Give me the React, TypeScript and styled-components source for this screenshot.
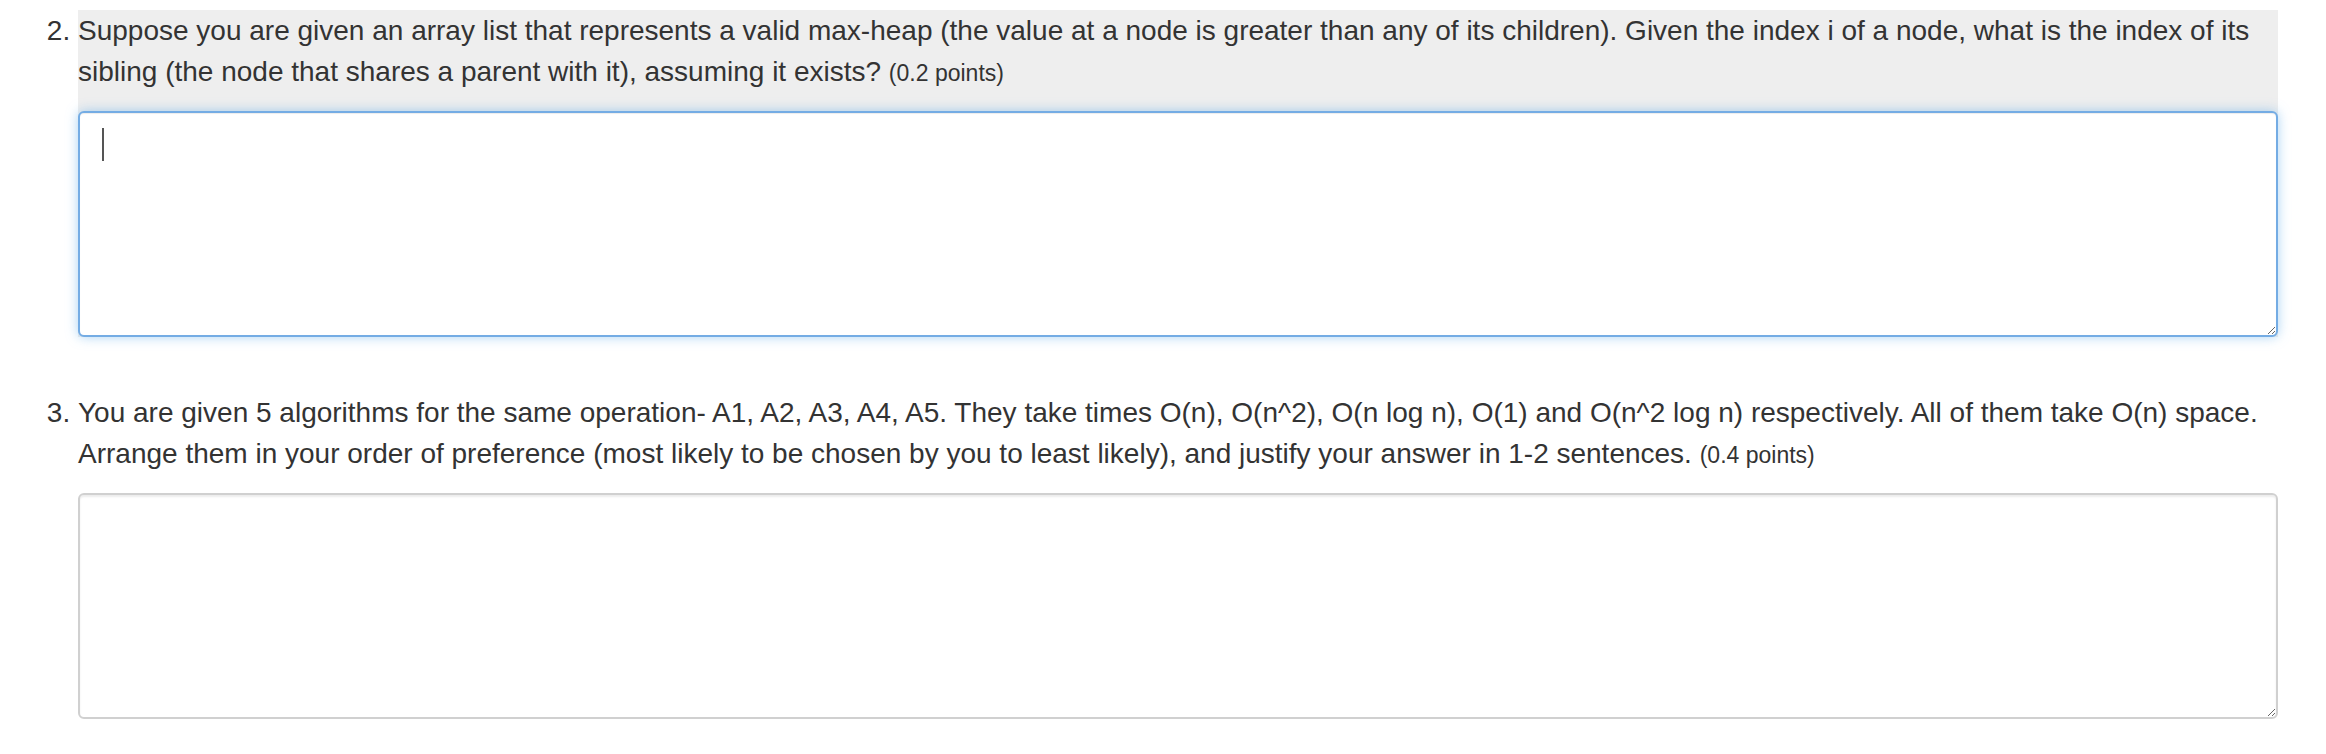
import { createGlobalStyle, styled } from 'styled-components';

const GlobalStyle = createGlobalStyle`
  html, body {
    margin: 0;
    padding: 0;
    background: #fff;
  }
  body {
    font-family: 'Liberation Sans', Arial, Helvetica, sans-serif;
    color: #333;
  }
`;

const QUESTIONS = [
  {
    number: 2,
    text: 'Suppose you are given an array list that represents a valid max-heap (the value at a node is greater than any of its children). Given the index i of a node, what is the index of its sibling (the node that shares a parent with it), assuming it exists?',
    points: '0.2',
    active: true,
  },
  {
    number: 3,
    text: 'You are given 5 algorithms for the same operation- A1, A2, A3, A4, A5. They take times O(n), O(n^2), O(n log n), O(1) and O(n^2 log n) respectively. All of them take O(n) space. Arrange them in your order of preference (most likely to be chosen by you to least likely), and justify your answer in 1-2 sentences.',
    points: '0.4',
    active: false,
  },
];

const App = () => {
  return (
    <>
      <GlobalStyle />
      <S.List start={2}>
        {QUESTIONS.map((q) => (
          <S.Item key={q.number} $active={q.active}>
            <S.Prompt>
              {q.text} <S.Points>({q.points} points)</S.Points>
            </S.Prompt>
            <S.AnswerBox>
              <S.Answer $focused={q.active} aria-label={`Answer ${q.number}`} />
              {q.active && <S.Caret />}
            </S.AnswerBox>
          </S.Item>
        ))}
      </S.List>
    </>
  );
};

export default App;

const S = {
  List: styled.ol`
    margin: 10px 0 0;
    padding: 0 48px 0 78px;
    list-style: decimal outside;
    font-size: 28px;
    line-height: 41px;
  `,

  Item: styled.li<{ $active: boolean }>`
    background: ${({ $active }) => ($active ? '#eeeeee' : 'transparent')};
    margin-bottom: 55px;
  `,

  Prompt: styled.div`
    color: #333;
  `,

  Points: styled.span`
    font-size: 23px;
  `,

  AnswerBox: styled.div`
    position: relative;
    margin-top: 17px;
  `,

  Answer: styled.textarea<{ $focused: boolean }>`
    display: block;
    box-sizing: border-box;
    width: 100%;
    height: 226px;
    padding: 9px 18px;
    font-family: 'Liberation Sans', Arial, sans-serif;
    font-size: 27px;
    color: #555;
    background: #fff;
    border: 2px solid ${({ $focused }) => ($focused ? '#74ace4' : '#d0d0d0')};
    border-radius: 6px;
    outline: none;
    box-shadow: ${({ $focused }) =>
      $focused
        ? 'inset 0 1px 1px rgba(0,0,0,.075), 0 0 12px rgba(102,175,233,.55)'
        : 'inset 0 2px 2px rgba(0,0,0,.075)'};
  `,

  Caret: styled.span`
    position: absolute;
    left: 24px;
    top: 17px;
    width: 2px;
    height: 33px;
    background: #555;
  `,
};
